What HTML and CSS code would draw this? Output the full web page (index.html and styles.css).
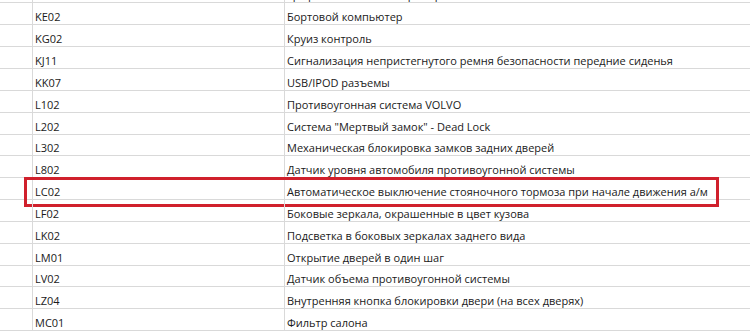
FILE: index.html
```html
<!DOCTYPE html>
<html lang="ru">
<head>
<meta charset="utf-8">
<link rel="stylesheet" href="styles.css">
</head>
<body>
<div class="sheet">
  <div class="row"><div class="c a"></div><div class="c b">KD04</div><div class="c d">Графическая панель приборов 3</div></div>
  <div class="row"><div class="c a"></div><div class="c b">KE02</div><div class="c d">Бортовой компьютер</div></div>
  <div class="row"><div class="c a"></div><div class="c b">KG02</div><div class="c d">Круиз контроль</div></div>
  <div class="row"><div class="c a"></div><div class="c b">KJ11</div><div class="c d">Сигнализация непристегнутого ремня безопасности передние сиденья</div></div>
  <div class="row"><div class="c a"></div><div class="c b">KK07</div><div class="c d">USB/IPOD разъемы</div></div>
  <div class="row"><div class="c a"></div><div class="c b">L102</div><div class="c d">Противоугонная система VOLVO</div></div>
  <div class="row"><div class="c a"></div><div class="c b">L202</div><div class="c d">Система "Мертвый замок" - Dead Lock</div></div>
  <div class="row"><div class="c a"></div><div class="c b">L302</div><div class="c d">Механическая блокировка замков задних дверей</div></div>
  <div class="row"><div class="c a"></div><div class="c b">L802</div><div class="c d">Датчик уровня автомобиля противоугонной системы</div></div>
  <div class="row hl"><div class="c a"></div><div class="c b">LC02</div><div class="c d">Автоматическое выключение стояночного тормоза при начале движения а/м</div></div>
  <div class="row"><div class="c a"></div><div class="c b">LF02</div><div class="c d">Боковые зеркала, окрашенные в цвет кузова</div></div>
  <div class="row"><div class="c a"></div><div class="c b">LK02</div><div class="c d">Подсветка в боковых зеркалах заднего вида</div></div>
  <div class="row"><div class="c a"></div><div class="c b">LM01</div><div class="c d">Открытие дверей в один шаг</div></div>
  <div class="row"><div class="c a"></div><div class="c b">LV02</div><div class="c d">Датчик объема противоугонной системы</div></div>
  <div class="row"><div class="c a"></div><div class="c b">LZ04</div><div class="c d">Внутренняя кнопка блокировки двери (на всех дверях)</div></div>
  <div class="row"><div class="c a"></div><div class="c b">MC01</div><div class="c d">Фильтр салона</div></div>
</div>
</body>
</html>
```
FILE: styles.css
```css
html, body {
  margin: 0;
  padding: 0;
  background: #ffffff;
  overflow: hidden;
}
.sheet {
  margin-top: -18.4px;
  font-family: "Open Sans", "Liberation Sans", sans-serif;
  font-size: 11px;
  color: #1a1a1a;
}
.row {
  position: relative;
  display: flex;
  height: 21.85px;
  box-sizing: border-box;
  border-bottom: 1px solid #d9d9d9;
}
.c {
  display: flex;
  align-items: flex-end;
  padding-bottom: 0;
  box-sizing: border-box;
  white-space: nowrap;
  line-height: 14px;
}
.a {
  width: 33px;
  border-right: 1px solid #d9d9d9;
}
.b {
  width: 252px;
  padding-left: 2px;
  border-right: 1px solid #d9d9d9;
}
.d {
  flex: 1;
  padding-left: 2px;
}
.hl::after {
  content: "";
  position: absolute;
  left: 24px;
  top: -1px;
  width: 695px;
  height: 30px;
  box-sizing: border-box;
  border: 3px solid #d0202c;
  pointer-events: none;
}
```
